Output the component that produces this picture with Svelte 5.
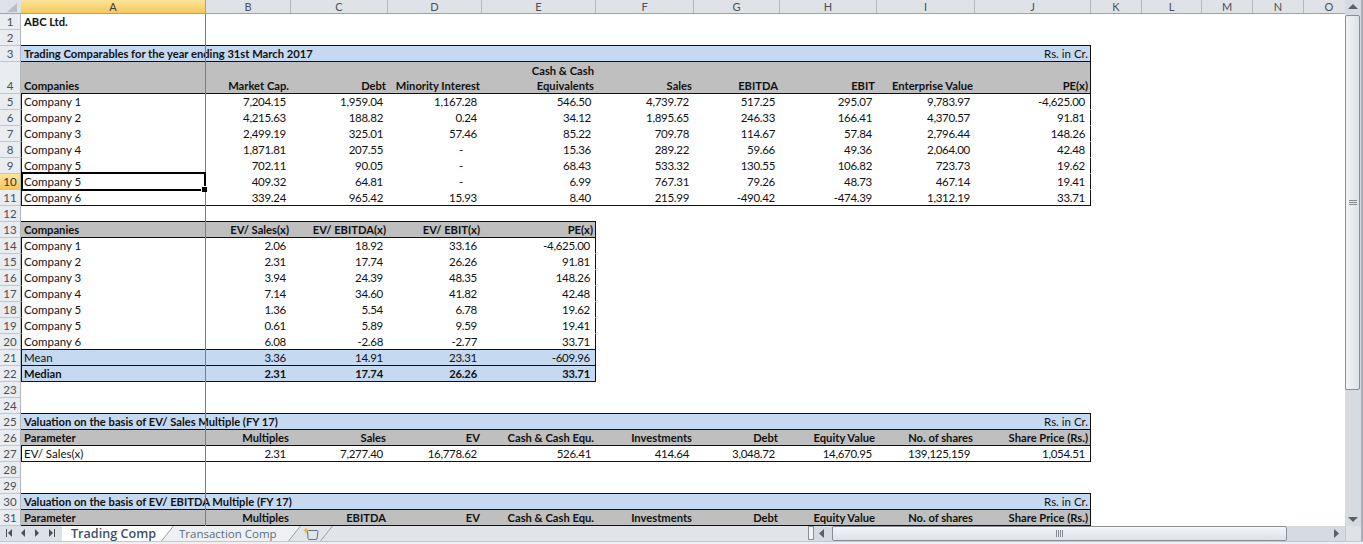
<script>
  const colNames = ['A','B','C','D','E','F','G','H','I','J','K','L','M','N','O'];
  const t = (title, note) => ({ title, note });
  const rows = [
    { n: 1, kind: 'plain', bold: true, cells: ['ABC Ltd.'], box: 0 },
    { n: 2, kind: 'plain', cells: [], rule: 10 },
    { n: 3, kind: 'title', ...t('Trading Comparables for the year ending 31st March 2017', 'Rs. in Cr.') },
    { n: 4, kind: 'hdr', tall: true, box: 10, cells: ['Companies','Market Cap.','Debt','Minority Interest','Cash & Cash\nEquivalents','Sales','EBITDA','EBIT','Enterprise Value','PE(x)'] },
    { n: 5, box: 10, cells: ['Company 1','7,204.15','1,959.04','1,167.28','546.50','4,739.72','517.25','295.07','9,783.97','-4,625.00'] },
    { n: 6, box: 10, cells: ['Company 2','4,215.63','188.82','0.24','34.12','1,895.65','246.33','166.41','4,370.57','91.81'] },
    { n: 7, box: 10, cells: ['Company 3','2,499.19','325.01','57.46','85.22','709.78','114.67','57.84','2,796.44','148.26'] },
    { n: 8, box: 10, cells: ['Company 4','1,871.81','207.55','-','15.36','289.22','59.66','49.36','2,064.00','42.48'] },
    { n: 9, box: 10, cells: ['Company 5','702.11','90.05','-','68.43','533.32','130.55','106.82','723.73','19.62'] },
    { n: 10, box: 10, active: true, cells: ['Company 5','409.32','64.81','-','6.99','767.31','79.26','48.73','467.14','19.41'] },
    { n: 11, box: 10, rule: 10, cells: ['Company 6','339.24','965.42','15.93','8.40','215.99','-490.42','-474.39','1,312.19','33.71'] },
    { n: 12, kind: 'plain', cells: [], rule: 5 },
    { n: 13, kind: 'hdr', box: 5, cells: ['Companies','EV/ Sales(x)','EV/ EBITDA(x)','EV/ EBIT(x)','PE(x)'] },
    { n: 14, box: 5, cells: ['Company 1','2.06','18.92','33.16','-4,625.00'] },
    { n: 15, box: 5, cells: ['Company 2','2.31','17.74','26.26','91.81'] },
    { n: 16, box: 5, cells: ['Company 3','3.94','24.39','48.35','148.26'] },
    { n: 17, box: 5, cells: ['Company 4','7.14','34.60','41.82','42.48'] },
    { n: 18, box: 5, cells: ['Company 5','1.36','5.54','6.78','19.62'] },
    { n: 19, box: 5, cells: ['Company 5','0.61','5.89','9.59','19.41'] },
    { n: 20, box: 5, rule: 5, cells: ['Company 6','6.08','-2.68','-2.77','33.71'] },
    { n: 21, kind: 'blue', box: 5, rule: 5, cells: ['Mean','3.36','14.91','23.31','-609.96'] },
    { n: 22, kind: 'blue', bold: true, box: 5, rule: 5, cells: ['Median','2.31','17.74','26.26','33.71'] },
    { n: 23, kind: 'plain', cells: [] },
    { n: 24, kind: 'plain', cells: [], rule: 10 },
    { n: 25, kind: 'title', ...t('Valuation on the basis of EV/ Sales Multiple (FY 17)', 'Rs. in Cr.') },
    { n: 26, kind: 'hdr', box: 10, cells: ['Parameter','Multiples','Sales','EV','Cash & Cash Equ.','Investments','Debt','Equity Value','No. of shares','Share Price (Rs.)'] },
    { n: 27, box: 10, rule: 10, cells: ['EV/ Sales(x)','2.31','7,277.40','16,778.62','526.41','414.64','3,048.72','14,670.95','139,125,159','1,054.51'] },
    { n: 28, kind: 'plain', cells: [] },
    { n: 29, kind: 'plain', cells: [], rule: 10 },
    { n: 30, kind: 'title', ...t('Valuation on the basis of EV/ EBITDA Multiple (FY 17)', 'Rs. in Cr.') },
    { n: 31, kind: 'hdr', box: 10, cells: ['Parameter','Multiples','EBITDA','EV','Cash & Cash Equ.','Investments','Debt','Equity Value','No. of shares','Share Price (Rs.)'] }
  ];
  const ten = [0,1,2,3,4,5,6,7,8,9];
</script>

<div class="app">
  <div class="top">
    <div class="sheet">
      <div class="colhead">
        <div class="corner">
          <svg width="21" height="14"><polygon points="17,3 17,12 7,12" fill="#b9bec5"/></svg>
        </div>
        {#each colNames as c, i}
          <div class="colname" class:sel={i === 0}>{c}</div>
        {/each}
      </div>

      {#each rows as r}
        <div class="row" class:tall={r.tall}>
          <div class="rownum" class:sel={r.active}>{r.n}</div>
          {#if r.kind === 'title'}
            <div class="cell title">
              <span class="b">{r.title}</span><span class="note">{r.note}</span>
            </div>
          {:else}
            {#each ten as i}
              <div
                class="cell {r.kind || ''}"
                class:b={r.bold || r.kind === 'hdr'}
                class:first={i === 0 && r.box && r.kind !== 'hdr'}
                class:lastc={r.box && i === r.box - 1}
                class:fill={r.box && i < r.box}
                class:rule={r.rule && i < r.rule}
                class:left={i === 0}
                class:dash={r.cells[i] === '-'}
              >{r.cells[i] ?? ''}</div>
            {/each}
          {/if}
        </div>
      {/each}

      <div class="freeze"></div>
      <div class="selection"><span class="handle"></span></div>
    </div>

    <div class="vscroll">
      <svg class="arrow" width="16" height="14"><polygon points="3,9 13,9 8,4" fill="#5b5f66"/></svg>
      <div class="vthumb"><span></span><span></span><span></span></div>
      <div class="vtrack"></div>
      <svg class="arrow" width="16" height="14"><polygon points="3,5 13,5 8,10" fill="#5b5f66"/></svg>
    </div>
  </div>

  <div class="bottom">
    <svg class="nav" width="62" height="16">
      <g fill="#4b5058">
        <rect x="6" y="4" width="1" height="8"/><polygon points="12,4 12,12 8,8"/>
        <polygon points="25,4 25,12 21,8"/>
        <polygon points="35,4 35,12 39,8"/>
        <polygon points="49,4 49,12 53,8"/><rect x="54" y="4" width="1" height="8"/>
      </g>
    </svg>
    <div class="tabs">
      <svg class="slants" width="300" height="16">
        <polygon points="0,0 112,0 99,15 0,15" fill="#fff"/>
        <polygon points="111,0 238,0 226,15 99,15" fill="#eef0f3"/>
        <path d="M99.500 15 L111.500 0 M226.500 15 L238.500 0 M258.500 15 L270.500 0" stroke="#9aa0a8" fill="none"/>
      </svg>
      <span class="tab on">Trading Comp</span>
      <span class="tab">Transaction Comp</span>
      <svg class="newsheet" width="18" height="16">
        <path d="M5.500 4.500h9.500q1 0 1 1l-1 7q0 1-1 1h-7q-1 0-1-1z" fill="#dfe6ef" stroke="#5f7286"/>
        <path d="M4 1.500l1 2 2 1-2 1-1 2-1-2-2-1 2-1z" fill="#f2b43c"/>
      </svg>
    </div>
    <div class="hsplit"></div>
    <div class="hscroll">
      <svg width="12" height="16"><polygon points="8,3 8,12 3,7.500" fill="#5b5f66"/></svg>
      <div class="hthumb"><span></span><span></span><span></span><span></span></div>
      <div class="htrack"></div>
      <svg width="12" height="16"><polygon points="4,3 4,12 9,7.500" fill="#5b5f66"/></svg>
    </div>
    <div class="hcorner"></div>
  </div>
  <div class="status"></div>
</div>

<style>
  :global(body) { margin: 0; background: #fff; }
  .app {
    width: 1363px;
    height: 544px;
    overflow: hidden;
    display: flex;
    flex-direction: column;
    font-family: Lato, "Liberation Sans", sans-serif;
    font-size: 11.5px;
    color: #111;
  }
  .top { display: flex; height: 526px; flex: none; }
  .sheet {
    position: relative;
    width: 1345px;
    flex: none;
    overflow: hidden;
    background: #fff;
  }
  .colhead {
    display: grid;
    grid-template-columns: 21px 185px 85px 97px 94px 114px 98px 86px 97px 98px 116px 51px 60px 51px 51px 51px;
    height: 14px;
    background: #dfe3e8;
    border-bottom: 1px solid #9da2a8;
    box-sizing: border-box;
  }
  .corner { height: 13px; overflow: hidden; }
  .colname {
    text-align: center;
    line-height: 13px;
    font-size: 11px;
    color: #4a4f57;
    border-right: 1px solid #b3b8bf;
  }
  .colname.sel {
    background: linear-gradient(#fbe59a, #f6c85a);
    border-right-color: #c79f3c;
    color: #3a3a3a;
  }
  .row {
    display: grid;
    grid-template-columns: 21px 185px 85px 97px 94px 114px 98px 86px 97px 98px 116px;
    height: 16px;
  }
  .row.tall { height: 32px; }
  .rownum {
    background: #e9ecf0;
    border-bottom: 1px solid #c2c6cc;
    border-right: 1px solid #b3b8bf;
    box-sizing: border-box;
    font-size: 11.5px;
    color: #4a4f57;
    text-align: center;
    display: flex;
    align-items: flex-end;
    justify-content: center;
    line-height: 15px;
  }
  .rownum.sel { background: linear-gradient(#fbe59a, #f6c85a); color: #333; }
  .cell {
    box-sizing: border-box;
    border-bottom: 1px solid transparent;
    padding: 0 5px 0 0;
    text-align: right;
    line-height: 15px;
    white-space: pre-line;
    letter-spacing: -0.3px;
    align-self: stretch;
    display: flex;
    align-items: flex-end;
    justify-content: flex-end;
    min-width: 0;
  }
  .cell.plain { white-space: nowrap; }
  .cell.left {
    justify-content: flex-start;
    padding: 0 0 0 3px;
    text-align: left;
    white-space: nowrap;
    letter-spacing: 0;
  }
  .cell.first { border-left: 1px solid #111; padding-left: 2px; }
  .cell.lastc { border-right: 1px solid #111; }
  .cell.rule { border-bottom-color: #111; }
  .cell.hdr { background: #bfbfbf; padding-right: 2px; letter-spacing: 0; }
  .cell.hdr.fill { border-bottom-color: #111; }
  .cell.hdr:not(.fill) { background: none; }
  .cell.blue.fill { background: #c5d9f1; }
  .cell.blue:not(.fill) { background: none; }
  .cell.dash { padding-right: 19px; }
  .cell.b { font-size: 11.2px; }
  .cell.blue.b { letter-spacing: -0.15px; }
  .cell.blue.b.left { letter-spacing: 0; }
  .cell.title {
    grid-column: span 10;
    background: #c5d9f1;
    border: 0 solid #111;
    border-width: 0 1px 1px 0;
    padding: 0 2px 0 3px;
    justify-content: space-between;
    white-space: nowrap;
    letter-spacing: 0;
  }
  .b { font-weight: 700; font-size: 11.2px; }
  .note { font-weight: 400; }
  .freeze {
    position: absolute;
    left: 205px;
    top: 14px;
    bottom: 0;
    width: 1px;
    background: #7c7c7c;
  }
  .selection {
    position: absolute;
    left: 21px;
    top: 172px;
    width: 185px;
    height: 19px;
    box-sizing: border-box;
    border: 2px solid #000;
  }
  .handle {
    position: absolute;
    right: -3px;
    bottom: -3px;
    width: 5px;
    height: 5px;
    background: #000;
    border: 1px solid #fff;
    border-width: 1px 0 0 1px;
  }
  .vscroll {
    width: 18px;
    flex: none;
    box-sizing: border-box;
    background: #d6dae1;
    border-right: 2px solid #a9adb3;
    display: flex;
    flex-direction: column;
  }
  .arrow { flex: none; }
  .vthumb {
    margin-top: 1px;
    height: 375px;
    width: 15px;
    box-sizing: border-box;
    border: 1px solid #8b8f95;
    border-radius: 2px;
    background: linear-gradient(90deg, #f2f4f7, #dde1e8);
    display: flex;
    flex-direction: column;
    justify-content: center;
    align-items: center;
    gap: 1px;
    flex: none;
  }
  .vthumb span { width: 8px; height: 1px; background: #85898f; }
  .vtrack { flex: 1; }
  .bottom {
    display: flex;
    height: 15px;
    flex: none;
    background: #e1e4e9;
    overflow: hidden;
  }
  .nav { flex: none; margin-top: -1px; background: #dde2e8; }
  .tabs {
    position: relative;
    flex: none;
    width: 746px;
    display: flex;
    align-items: center;
    font-family: "Open Sans", "Liberation Sans", sans-serif;
    font-size: 11.5px;
    line-height: 15px;
  }
  .slants { position: absolute; left: 0; top: 0; }
  .tab { position: relative; color: #5c6c80; margin-left: 23px; }
  .tab.on { color: #3d5068; font-weight: 600; font-size: 12.6px; margin-left: 9px; }
  .newsheet { position: relative; margin-left: 25px; flex: none; }
  .hsplit {
    flex: none;
    width: 6px;
    box-sizing: border-box;
    background: #f3f4f6;
    border: 1px solid #8b8f95;
    height: 14px;
  }
  .hscroll {
    flex: 1;
    display: flex;
    align-items: stretch;
    background: #d6dae1;
    padding-left: 2px;
    padding-right: 3px;
  }
  .hthumb {
    flex: none;
    margin-left: 4px;
    width: 455px;
    box-sizing: border-box;
    border: 1px solid #8b8f95;
    border-radius: 2px;
    background: linear-gradient(#f4f6f8, #dde1e8);
    display: flex;
    justify-content: center;
    align-items: center;
    gap: 1px;
  }
  .hthumb span { width: 1px; height: 7px; background: #85898f; }
  .htrack { flex: 1; }
  .hcorner {
    width: 18px;
    flex: none;
    box-sizing: border-box;
    background: #dfe2e7;
    border-left: 1px solid #c4c8ce;
    border-right: 2px solid #a9adb3;
  }
  .status {
    flex: 1;
    background: #eef0f3;
    border-top: 1px solid #c4c8ce;
  }
</style>
